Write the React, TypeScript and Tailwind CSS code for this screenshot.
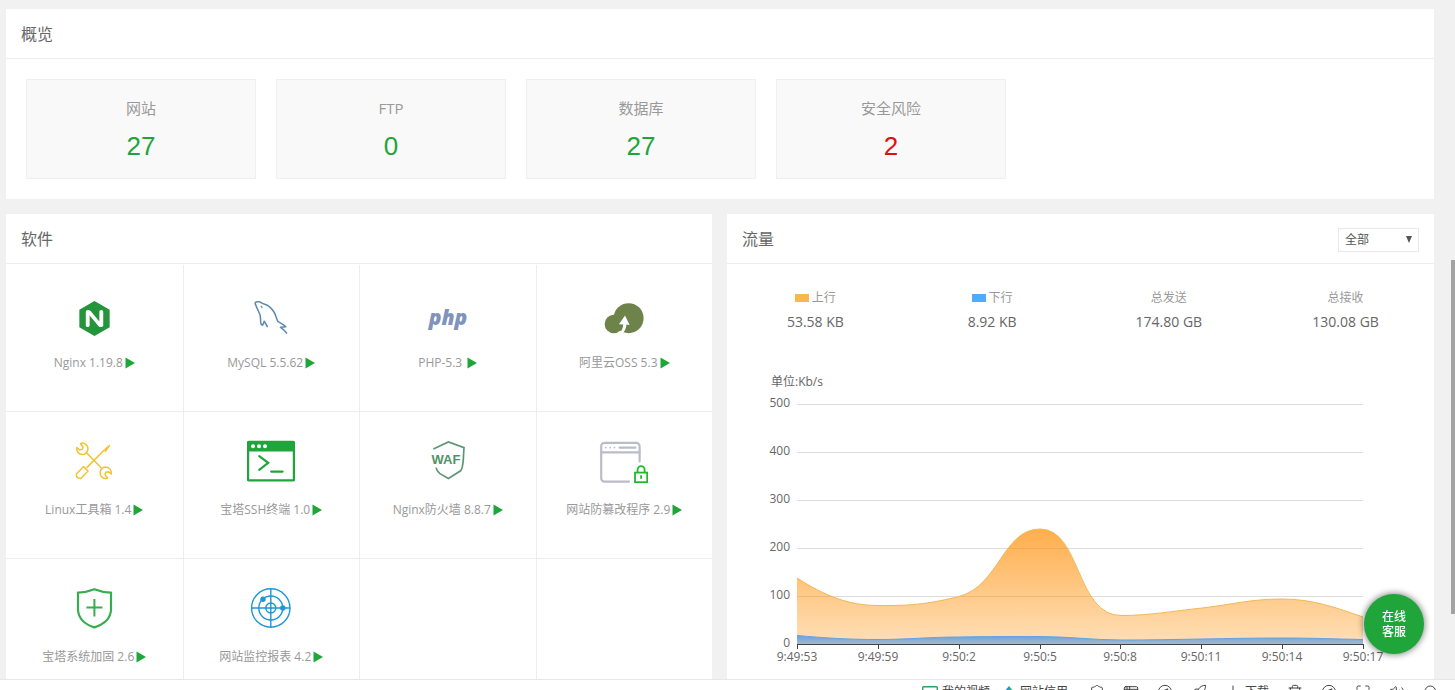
import type { ReactNode } from 'react';
import {
  AppWindow,
  Compass,
  Download,
  Maximize,
  Rocket,
  Search,
  ShieldCheck,
  Trash2,
  Volume2,
} from 'lucide-react';
import { SiNginx } from 'react-icons/si';

const overview = [
  { label: '网站', value: '27', danger: false },
  { label: 'FTP', value: '0', danger: false },
  { label: '数据库', value: '27', danger: false },
  { label: '安全风险', value: '2', danger: true },
];

const traffic = [
  { label: '上行', value: '53.58 KB', swatch: 'bg-[#f7b851]' },
  { label: '下行', value: '8.92 KB', swatch: 'bg-[#52a9ff]' },
  { label: '总发送', value: '174.80 GB', swatch: '' },
  { label: '总接收', value: '130.08 GB', swatch: '' },
];

function IconBox({ children }: { children: ReactNode }) {
  return (
    <svg width="48" height="48" viewBox="0 0 48 48" fill="none" aria-hidden="true">
      {children}
    </svg>
  );
}

const NginxIcon = () => (
  <div className="flex items-center justify-center w-12 h-12 pt-2">
    <SiNginx size={35} color="#25953b" />
  </div>
);

const MysqlIcon = () => (
  <IconBox>
    <g stroke="#5a8aab" strokeWidth="1.5" strokeLinecap="round" strokeLinejoin="round">
      <path d="M20.3 36.5 17.2 31.2 15.6 35.2C14 35 13.4 33 13.6 29.5 13.8 26 13.3 24 11.3 20.8 9.8 18.4 9.2 16 8.2 13.6 7.9 12 9.6 11.4 12 11.8 14 12 15 13.8 17 14 21 14.8 24.5 18 27 22 28.8 25 29.4 28.6 31 31.6 33.5 33 36.5 34.6 38.8 36.8L33.4 37.2C35.6 38.8 38.2 40.4 39.6 43.2" />
      <path d="M14 16.2c.8.4 1 .8 1 1.6" strokeWidth="1.1" />
    </g>
  </IconBox>
);

const PhpIcon = () => (
  <IconBox>
    <text
      x="24"
      y="35"
      textAnchor="middle"
      fill="#8093bd"
      fontFamily="Open Sans, sans-serif"
      fontSize="21"
      fontStyle="italic"
      fontWeight="800"
    >
      php
    </text>
  </IconBox>
);

const OssIcon = () => (
  <IconBox>
    <circle cx="28.6" cy="28.2" r="15" fill="#6d834a" />
    <circle cx="13.8" cy="34" r="9.2" fill="#6d834a" />
    <path d="M25 25.5 29.6 35 26.4 34.4C26.4 37.6 25.2 40.6 22.2 43.8L19 43.6C21.6 41 23 38 23.2 34.4L19 34.2Z" fill="#fff" />
  </IconBox>
);

const ToolsIcon = () => (
  <IconBox>
    <g stroke="#f2c331" strokeWidth="1.5" strokeLinejoin="round" strokeLinecap="round">
      <path d="M11.4 6.2 10.4 6.8 13 10 12.2 12.4 9.4 12.8 6.8 10.6C6 13.8 8.6 17.4 12.4 17.6L14.6 17.2 16 15.9 17.3 14.6C18.8 11.4 17.8 8 14.6 6.6 13.4 6 12.2 6 11.4 6.2Z" />
      <path d="M36.6 41.6 37.6 41 35 37.6 35.8 35.2 38.6 34.8 41.2 37C42 33.8 39.4 30.2 35.6 30L33.4 30.4 32 31.7 30.7 33C29.2 36.2 30.2 39.6 33.4 41 34.6 41.6 35.8 41.6 36.6 41.6Z" />
      <path d="M17 16.2 31.4 31" />
      <path d="M39.4 8.6 34 13.2 17 30.4M39.4 8.6 35.4 14.4" />
      <path d="M13.6 29.6 18 34 10.8 41.4 8 41 6.6 39.6 6.4 37Z" />
    </g>
  </IconBox>
);

const TerminalIcon = () => (
  <IconBox>
    <rect x="1" y="5" width="46" height="38.4" rx="1" stroke="#20a53a" strokeWidth="2.4" />
    <path d="M1 5h46v9.4H1z" fill="#20a53a" />
    <g fill="#fff">
      <circle cx="6" cy="9.2" r="2" />
      <circle cx="12" cy="9.2" r="2" />
      <circle cx="18" cy="9.2" r="2" />
    </g>
    <path d="m12.2 19.2 9 6.6-9 7M24.2 34.6h11.4" stroke="#20a53a" strokeWidth="2.2" strokeLinecap="round" />
  </IconBox>
);

const WafIcon = () => (
  <IconBox>
    <path
      d="M9.4 12 24.4 5 40 10.6 39.2 24C38.8 28.6 38.4 31.4 36.6 33.8L24.4 41.4 15.6 36.4C13.8 34.8 12.6 33 12 30.6"
      stroke="#5f9673"
      strokeWidth="1.7"
    />
    <text
      x="22"
      y="27.4"
      textAnchor="middle"
      fill="#4f9468"
      fontFamily="Liberation Sans, Arial, sans-serif"
      fontSize="13"
      fontWeight="700"
    >
      WAF
    </text>
  </IconBox>
);

const TamperIcon = () => (
  <IconBox>
    <g stroke="#bcbbc9" strokeWidth="2.2" strokeLinecap="round">
      <path d="M39.6 24.4V9.2a3.4 3.4 0 0 0-3.4-3.4H4.6A3.4 3.4 0 0 0 1.2 9.2v32a3.4 3.4 0 0 0 3.4 3.4H29" />
      <path d="M1.2 15.4h38.4M19.6 10.6h15.8" />
      <path d="M5.8 10.6h.1M10.2 10.6h.1M14.4 10.6h.1" strokeWidth="1.8" />
    </g>
    <rect x="35" y="35.6" width="12.2" height="9.6" stroke="#1fba2b" strokeWidth="1.8" />
    <path d="M37.6 35.4v-2.8a3.5 3.5 0 0 1 7 0v2.8M41.1 38.2v3.6" stroke="#1fba2b" strokeWidth="1.8" />
  </IconBox>
);

const ShieldPlusIcon = () => (
  <IconBox>
    <path
      d="M24.4 5.2C19 7.4 13.6 8.4 8 8.6V26C8.6 34.6 15 40.4 24.4 43.4 33.8 40.4 40.4 34.6 41 26V8.6C35.4 8.4 29.8 7.4 24.4 5.2Z"
      stroke="#36ad4e"
      strokeWidth="2.2"
      strokeLinejoin="round"
    />
    <path d="M24.4 15v17.6M16.4 23.4h16" stroke="#36ad4e" strokeWidth="2" />
  </IconBox>
);

const RadarIcon = () => (
  <IconBox>
    <g stroke="#1d97d6" strokeWidth="1.4">
      <circle cx="23.8" cy="24" r="19.2" />
      <circle cx="23.8" cy="24" r="12" />
      <circle cx="23.8" cy="24" r="5" />
      <path d="M4.6 24H43M23.8 4.8v38.4" />
    </g>
    <circle cx="16" cy="15.2" r="2.7" fill="#1d97d6" />
    <circle cx="35.8" cy="24" r="2.7" fill="#1d97d6" />
  </IconBox>
);

const software = [
  { name: 'Nginx 1.19.8', icon: NginxIcon },
  { name: 'MySQL 5.5.62', icon: MysqlIcon },
  { name: 'PHP-5.3 ', icon: PhpIcon },
  { name: '阿里云OSS 5.3', icon: OssIcon },
  { name: 'Linux工具箱 1.4', icon: ToolsIcon },
  { name: '宝塔SSH终端 1.0', icon: TerminalIcon },
  { name: 'Nginx防火墙 8.8.7', icon: WafIcon },
  { name: '网站防篡改程序 2.9', icon: TamperIcon },
  { name: '宝塔系统加固 2.6', icon: ShieldPlusIcon },
  { name: '网站监控报表 4.2', icon: RadarIcon },
  { name: '', icon: null },
  { name: '', icon: null },
];

const yTicks = [500, 400, 300, 200, 100, 0];
const xTicks = ['9:49:53', '9:49:59', '9:50:2', '9:50:5', '9:50:8', '9:50:11', '9:50:14', '9:50:17'];

const upLine =
  'M70 214C98 232 122 241.5 151 241.5 188 242 205 239 232 232.5 272 222 276 165 313 165 354 165 349 251.5 394 251.5 422 251.5 447 247 475 244 505 240.5 524 235 555 235 586 235 610 244 636 253';
const downLine =
  'M70 271.5C98 274 122 275.5 151 275.5 180 275.5 203 273 232 273 260 272.5 284 272.5 313 272.5 341 272.5 366 276 394 276 422 276 447 275.5 475 275 503 274.5 527 274 555 274 584 274 608 275 636 275.5';

function TrafficChart() {
  return (
    <svg
      viewBox="0 0 707 316"
      className="w-full mt-8 block"
      fontSize="12"
      fill="#666"
      role="img"
      aria-label="流量"
    >
      <defs>
        <linearGradient id="up" x1="0" y1="0" x2="0" y2="1">
          <stop offset="0" stopColor="#ff8c00" stopOpacity="0.7" />
          <stop offset="1" stopColor="#ff8c00" stopOpacity="0.28" />
        </linearGradient>
        <linearGradient id="down" x1="0" y1="0" x2="0" y2="1">
          <stop offset="0" stopColor="#65a2e0" />
          <stop offset="1" stopColor="#a6bac9" />
        </linearGradient>
      </defs>

      <text x="44" y="22">单位:Kb/s</text>
      {yTicks.map((tick, i) => (
        <g key={tick}>
          <text x="63" y={43 + i * 48} textAnchor="end">{tick}</text>
          {tick > 0 && (
            <path d={`M70 ${40.5 + i * 48}H636`} stroke="#ddd" shapeRendering="crispEdges" />
          )}
        </g>
      ))}

      <path d={`${upLine}V280H70Z`} fill="url(#up)" />
      <path d={upLine} fill="none" stroke="#f0b955" />
      <path d={`${downLine}V280H70Z`} fill="url(#down)" />
      <path d={downLine} fill="none" stroke="#62a3e3" />

      <path d="M70 280.5H637" stroke="#444" shapeRendering="crispEdges" />
      {xTicks.map((tick, i) => {
        const x = Math.round(70 + (i * 566) / 7);
        return (
          <g key={tick}>
            <path d={`M${x + 0.5} 280v5`} stroke="#444" shapeRendering="crispEdges" />
            <text x={x} y="297" textAnchor="middle">{tick}</text>
          </g>
        );
      })}
    </svg>
  );
}

function PanelHeader({ title, children }: { title: string; children?: ReactNode }) {
  return (
    <div className="flex items-center justify-between h-[50px] px-[15px] border-b border-[#ededed]">
      <h2 className="text-base text-[#666]">{title}</h2>
      {children}
    </div>
  );
}

const tools = [
  { label: '安全', icon: ShieldCheck },
  { label: '窗口', icon: AppWindow },
  { label: '浏览', icon: Compass },
  { label: '加速', icon: Rocket },
];

const moreTools = [
  { label: '清理', icon: Trash2 },
  { label: '导航', icon: Compass },
  { label: '全屏', icon: Maximize },
  { label: '声音', icon: Volume2 },
  { label: '搜索', icon: Search },
];

function StatusBar() {
  return (
    <footer className="h-[11px] shrink-0 overflow-hidden bg-white border-t border-[#e6e6e6] text-[#444]">
      <div className="flex justify-end items-center pt-1 pr-[7px] h-5 text-xs leading-4">
        <a href="#video" className="flex items-center gap-1 mr-3">
          <svg width="16" height="16" viewBox="0 0 16 16" fill="none" aria-hidden="true">
            <rect x=".7" y="2.7" width="14.6" height="12" rx="1" stroke="#2e9e6b" strokeWidth="1.4" />
          </svg>
          我的视频
        </a>
        <a href="#credit" className="flex items-center gap-1 mr-3">
          <svg width="14" height="16" viewBox="0 0 14 16" aria-hidden="true">
            <path d="M7 2 13 9H7Z" fill="#2fae7a" />
            <path d="M7 2 1 9h6Z" fill="#2f8fdc" />
            <path d="M1 9h12l-6 7Z" fill="#f3a536" />
          </svg>
          网站信用
        </a>
        {tools.map(({ label, icon: Icon }) => (
          <button key={label} aria-label={label} className="w-[34px] flex justify-center">
            <Icon size={16} strokeWidth={1.5} />
          </button>
        ))}
        <button className="w-[62px] flex items-center justify-center gap-1">
          <Download size={16} strokeWidth={1.5} />
          下载
        </button>
        {moreTools.map(({ label, icon: Icon }) => (
          <button key={label} aria-label={label} className="w-[34px] flex justify-center">
            <Icon size={16} strokeWidth={1.5} />
          </button>
        ))}
      </div>
    </footer>
  );
}

export default function App() {
  return (
    <div className="h-screen flex flex-col overflow-hidden bg-[#f1f1f1] font-['Open_Sans','Noto_Sans_CJK_SC',sans-serif]">
      <div className="flex flex-1 min-h-0">
        <main className="flex-1 min-w-0 overflow-hidden pt-[9px] pl-1.5 pr-[17px]">
          <section className="bg-white">
            <PanelHeader title="概览" />
            <div className="flex flex-wrap gap-5 p-5">
              {overview.map((item) => (
                <div
                  key={item.label}
                  className="w-[230px] h-[100px] pt-4 bg-[#f9f9f9] border border-[#efefef] text-center"
                >
                  <p className="text-[15px] leading-6 text-[#999]">{item.label}</p>
                  <a
                    href="#detail"
                    className={`block mt-2.5 font-['Liberation_Sans',Arial,sans-serif] text-[26px] leading-8 ${
                      item.danger ? 'text-[#e01010]' : 'text-[#20a53a]'
                    }`}
                  >
                    {item.value}
                  </a>
                </div>
              ))}
            </div>
          </section>

          <div className="grid grid-cols-[706fr_707fr] gap-[15px] mt-[15px]">
            <section className="bg-white">
              <PanelHeader title="软件" />
              <div className="grid grid-cols-4 pt-px">
                {software.map(({ name, icon: Icon }, i) => (
                  <div
                    key={i}
                    className="h-[147px] pt-[25px] flex flex-col items-center border-b border-l border-[#ebedf0] nth-[4n+1]:border-l-0"
                  >
                    {Icon && (
                      <>
                        <Icon />
                        <p className="flex items-center gap-0.5 mt-4 text-xs leading-[18px] text-[#999] whitespace-pre">
                          {name}
                          <svg width="10" height="12" viewBox="0 0 10 12" fill="#20a53a" aria-hidden="true">
                            <path d="M.5.5 10 6 .5 11.5Z" />
                          </svg>
                        </p>
                      </>
                    )}
                  </div>
                ))}
              </div>
            </section>

            <section className="bg-white">
              <PanelHeader title="流量">
                <div className="relative pt-0.5">
                  <select
                    aria-label="网卡"
                    className="block appearance-none w-[81px] h-6 pl-1.5 bg-white border border-[#e8e8e8] text-xs text-[#555]"
                  >
                    <option>全部</option>
                  </select>
                  <svg
                    width="6"
                    height="7"
                    viewBox="0 0 6 7"
                    fill="#555"
                    className="absolute right-[7px] top-2.5 pointer-events-none"
                    aria-hidden="true"
                  >
                    <path d="M0 0h6L3 7Z" />
                  </svg>
                </div>
              </PanelHeader>
              <div className="grid grid-cols-4 pt-[25px] text-center">
                {traffic.map((item) => (
                  <div key={item.label}>
                    <p className="flex items-center justify-center gap-[3px] text-xs leading-[18px] text-[#999]">
                      {item.swatch && <span className={`w-3.5 h-2 ${item.swatch}`} />}
                      {item.label}
                    </p>
                    <p className="mt-[5px] text-sm leading-5 text-[#666]">{item.value}</p>
                  </div>
                ))}
              </div>
              <TrafficChart />
            </section>
          </div>
        </main>

        <div className="w-1 pt-[260px]" aria-hidden="true">
          <div className="h-[354px] bg-[#a3a3a3]" />
        </div>
      </div>

      <StatusBar />

      <button className="fixed right-[31px] bottom-9 w-[60px] h-[60px] px-4 rounded-full bg-[#20a53a] text-white text-xs leading-[15px] font-medium shadow-[0_0_6px_1px_rgba(0,0,0,0.45)]">
        在线
        <br />
        客服
      </button>
    </div>
  );
}
